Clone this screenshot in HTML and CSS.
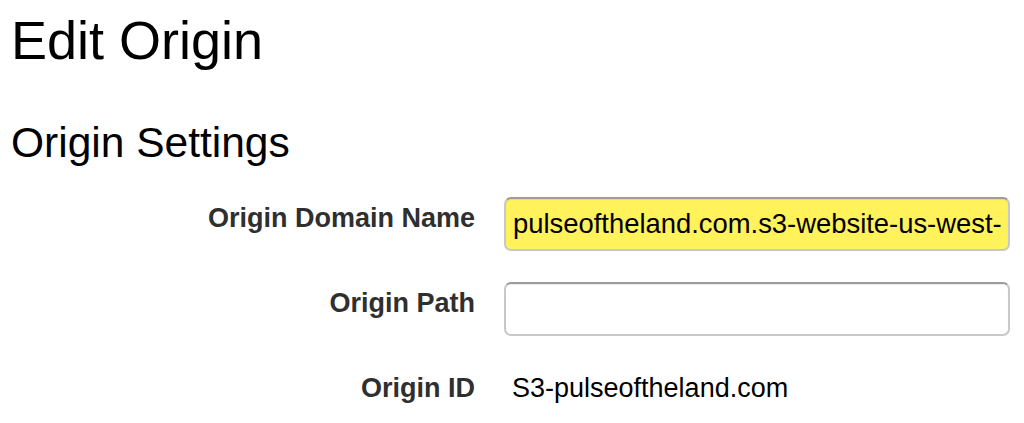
FILE: index.html
```html
<!DOCTYPE html>
<html lang="en">
<head>
<meta charset="utf-8">
<title>Edit Origin</title>
<link rel="stylesheet" href="styles.css">
</head>
<body>
<div class="page">
  <h1 class="title">Edit Origin</h1>
  <h2 class="section">Origin Settings</h2>
  <div class="form">
    <div class="row">
      <label class="label" for="domain">Origin Domain Name</label>
      <input class="field field-autofill" id="domain" type="text" value="pulseoftheland.com.s3-website-us-west-1.amazonaws.com">
    </div>
    <div class="row">
      <label class="label" for="path">Origin Path</label>
      <input class="field" id="path" type="text" value="">
    </div>
    <div class="row">
      <span class="label">Origin ID</span>
      <span class="value">S3-pulseoftheland.com</span>
    </div>
  </div>
</div>
</body>
</html>
```

FILE: styles.css
```css
html, body {
  margin: 0;
  padding: 0;
  background: #ffffff;
}

body {
  font-family: "Liberation Sans", Arial, sans-serif;
  color: #000000;
}

.page {
  padding: 10px 0 0 11px;
}

.title {
  margin: 0;
  font-size: 54px;
  font-weight: normal;
  line-height: 60px;
}

.section {
  margin: 49px 0 0 0;
  font-size: 42.5px;
  font-weight: normal;
  line-height: 48px;
}

.form {
  margin-top: 30px;
  display: flex;
  flex-direction: column;
  gap: 31px;
}

.row {
  display: flex;
  align-items: flex-start;
  gap: 29px;
}

.label {
  width: 464px;
  flex: none;
  text-align: right;
  font-size: 27px;
  font-weight: bold;
  color: #2f2f2f;
  line-height: 31px;
  padding-top: 6px;
}

.field {
  box-sizing: border-box;
  width: 506px;
  height: 54px;
  margin: 0;
  padding: 0 6px 0 7px;
  font-family: "Liberation Sans", Arial, sans-serif;
  font-size: 27.4px;
  color: #000000;
  background: #ffffff;
  border: 2px solid #c8c8c8;
  border-top-color: #9c9c9c;
  border-radius: 7px;
  box-shadow: inset 0 1px 1px rgba(0, 0, 0, 0.08);
  outline: none;
}

.field-autofill {
  background: #fff25a;
}

.value {
  font-size: 27px;
  line-height: 31px;
  padding-top: 6px;
  padding-left: 8px;
  color: #000000;
}
```
